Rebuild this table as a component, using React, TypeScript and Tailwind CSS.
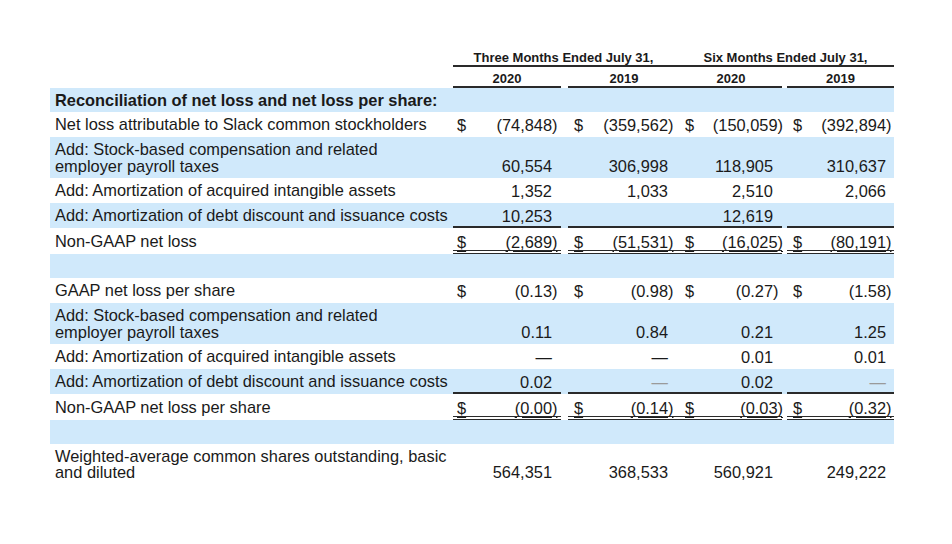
import React from "react"

const BLUE = "bg-[#d0e9fb]"

type RowProps = {
  label?: React.ReactNode
  bold?: boolean
  blue?: boolean
  h: string
  vals?: (string | null)[]
  dollars?: boolean
  line?: "single" | "double"
  wide?: number[]
}

// column widths in px: label | c1 | gap | c2 | c3 | gap | c4
const colW = ["w-[108px]", "w-[112px]", "w-[102px]", "w-[107px]"]
const colPl = ["pl-[4px]", "pl-[6px]", "pl-[5px]", "pl-[6px]"]
const colPr = ["pr-[9px]", "pr-[12px]", "pr-[9px]", "pr-[8px]"]

function Value({ v, wide, under }: { v: string; wide: boolean; under: boolean }) {
  if (v === "—" || v === "-") {
    return <span className={v === "—" ? "text-[#1a1a1a]" : "text-[#9a9a9a]"}>—</span>
  }
  if (v.startsWith("(")) {
    return (
      <span className={under ? "underline underline-offset-[3px]" : ""}>
        {v.slice(0, -1)}
        <span className={wide ? "-mr-[10px]" : "-mr-[5.5px]"}>)</span>
      </span>
    )
  }
  return <span className={under ? "underline underline-offset-[3px]" : ""}>{v}</span>
}

function Row({ label, bold, blue, h, vals, dollars, line, wide = [] }: RowProps) {
  const border =
    line === "single"
      ? "border-b-2 border-[#2a2a2a] pb-[2px]"
      : line === "double"
      ? "border-b-[4px] border-double border-[#2a2a2a] pb-0"
      : "pb-[4px]"
  const under = line === "double"

  const cell = (i: number) => {
    const v = vals ? vals[i] : null
    return (
      <div className={`${colW[i]} flex items-end justify-between ${colPl[i]} ${colPr[i]} ${vals ? border : "pb-[4px]"}`}>
        <span className={under ? "underline underline-offset-[3px]" : ""}>{dollars ? "$" : ""}</span>
        {v ? <Value v={v} wide={wide.includes(i)} under={under} /> : <span />}
      </div>
    )
  }

  return (
    <div className={`flex ${h} ${blue ? BLUE : "bg-white"}`}>
      <div className={`w-[403px] flex items-center pl-[5px] whitespace-nowrap leading-[16.5px] ${bold ? "font-bold" : ""}`}>
        <div>{label}</div>
      </div>
      {cell(0)}
      <div className="w-[7px]" />
      {cell(1)}
      {cell(2)}
      <div className="w-[5px]" />
      {cell(3)}
    </div>
  )
}

export default function App() {
  return (
    <div
      className="min-h-screen w-[952px] h-[544px] bg-white text-[#1a1a1a] text-[16.4px] leading-[16.5px]"
      style={{ fontFamily: '"Liberation Sans", Arial, sans-serif' }}
    >
      <div className="pl-[50px] pt-[47px] w-[894px]">
        {/* header */}
        <div className="flex text-[13px] font-bold leading-[15px]">
          <div className="w-[403px]" />
          <div className="flex w-[441px] h-[20px] border-b-2 border-[#2a2a2a]">
            <div className="w-[227px] flex items-center justify-center pr-[6px] pt-[2px]">Three Months Ended July 31,</div>
            <div className="w-[214px] flex items-center justify-center pr-[3px] pt-[2px]">Six Months Ended July 31,</div>
          </div>
        </div>
        <div className="flex text-[13px] font-bold leading-[15px] h-[21px]">
          <div className="w-[403px]" />
          <div className="w-[108px] flex items-center justify-center pt-[3px] border-b-2 border-[#2a2a2a]">2020</div>
          <div className="w-[7px]" />
          <div className="w-[112px] flex items-center justify-center pt-[3px] border-b-2 border-[#2a2a2a]">2019</div>
          <div className="w-[102px] flex items-center justify-center pt-[3px] border-b-2 border-[#2a2a2a]">2020</div>
          <div className="w-[5px]" />
          <div className="w-[107px] flex items-center justify-center pt-[3px] border-b-2 border-[#2a2a2a]">2019</div>
        </div>

        <Row h="h-[24px]" blue bold label="Reconciliation of net loss and net loss per share:" />
        <Row
          h="h-[25px]"
          label="Net loss attributable to Slack common stockholders"
          dollars
          vals={["(74,848)", "(359,562)", "(150,059)", "(392,894)"]}
          wide={[2]}
        />
        <Row
          h="h-[41px]"
          blue
          label={<>Add: Stock-based compensation and related<br />employer payroll taxes</>}
          vals={["60,554", "306,998", "118,905", "310,637"]}
        />
        <Row
          h="h-[25px]"
          label="Add: Amortization of acquired intangible assets"
          vals={["1,352", "1,033", "2,510", "2,066"]}
        />
        <Row
          h="h-[25px]"
          blue
          label="Add: Amortization of debt discount and issuance costs"
          vals={["10,253", null, "12,619", null]}
          line="single"
        />
        <Row
          h="h-[26px]"
          label="Non-GAAP net loss"
          dollars
          vals={["(2,689)", "(51,531)", "(16,025)", "(80,191)"]}
          line="double"
          wide={[2]}
        />
        <Row h="h-[24px]" blue />

        <Row
          h="h-[25px]"
          label="GAAP net loss per share"
          dollars
          vals={["(0.13)", "(0.98)", "(0.27)", "(1.58)"]}
        />
        <Row
          h="h-[41px]"
          blue
          label={<>Add: Stock-based compensation and related<br />employer payroll taxes</>}
          vals={["0.11", "0.84", "0.21", "1.25"]}
        />
        <Row
          h="h-[25px]"
          label="Add: Amortization of acquired intangible assets"
          vals={["—", "—", "0.01", "0.01"]}
        />
        <Row
          h="h-[25px]"
          blue
          label="Add: Amortization of debt discount and issuance costs"
          vals={["0.02", "-", "0.02", "-"]}
          line="single"
        />
        <Row
          h="h-[26px]"
          label="Non-GAAP net loss per share"
          dollars
          vals={["(0.00)", "(0.14)", "(0.03)", "(0.32)"]}
          line="double"
          wide={[2]}
        />
        <Row h="h-[24px]" blue />

        <Row
          h="h-[40px]"
          label={<>Weighted-average common shares outstanding, basic<br />and diluted</>}
          vals={["564,351", "368,533", "560,921", "249,222"]}
        />
      </div>
    </div>
  )
}
